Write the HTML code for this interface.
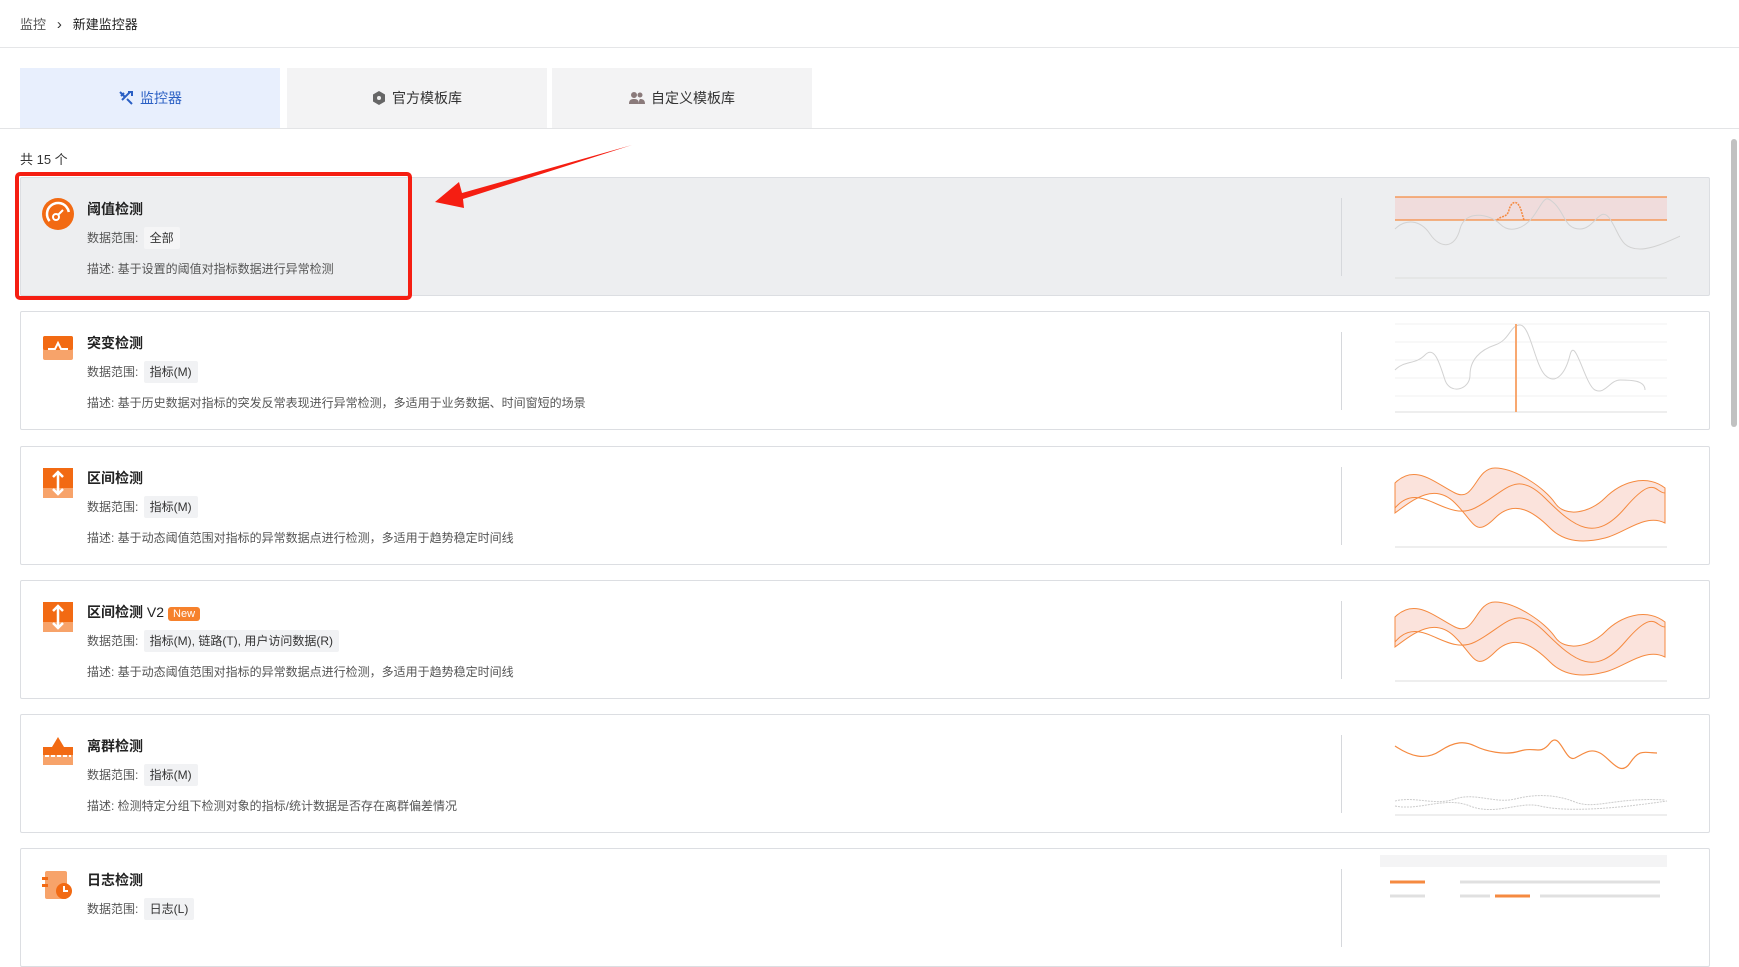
<!DOCTYPE html>
<html><head><meta charset="utf-8"><style>
*{box-sizing:border-box;margin:0;padding:0}
body{width:1739px;height:907px;overflow:hidden;background:#fff;font-family:"Liberation Sans","Noto Sans CJK SC",sans-serif;color:#333;font-size:13px;position:relative}
.bc{position:absolute;left:20px;top:14px;font-size:13px;color:#555}
.bc b{font-weight:normal;color:#222}
.hl{position:absolute;left:0;right:0;top:47px;border-top:1px solid #e5e6e8}
.tab{position:absolute;top:68px;width:260px;height:60px;background:#f3f3f4;display:flex;align-items:center;justify-content:center;font-size:14px;color:#333;gap:6px}
.tab.a{background:#e8effd;color:#2a5fc4}
.tl{position:absolute;left:0;right:0;top:128px;border-top:1px solid #e3e4e6}
.cnt{position:absolute;left:20px;top:149px;font-size:13px;color:#333}
.card{position:absolute;left:20px;width:1690px;height:119px;border:1px solid #dcdee2;border-radius:2px;background:#fff}
.card.g{background:#edeef0}
.ic{position:absolute;left:21px;top:20px;width:32px;height:32px}
.t{position:absolute;left:66px;top:21px;font-size:14px;font-weight:bold;color:#222}
.t span{font-weight:normal}
.new{display:inline-block;background:#f6812c;color:#fff;font-size:11px;font-weight:bold;padding:1px 5px;border-radius:3px;margin-left:4px}
.dr{position:absolute;left:66px;top:51px;font-size:12px;color:#555}
.dr i{font-style:normal;background:#f1f2f4;padding:4px 6px;border-radius:2px;color:#333;margin-left:2px}
.card.g .dr i{background:#f5f5f6}
.ds{position:absolute;left:66px;top:82px;font-size:12px;color:#555}
.dv{position:absolute;left:1320px;top:20px;height:78px;border-left:1px solid #d6d8dc}
.ch{position:absolute;left:1339px;top:6px}
.red{position:absolute;left:15px;top:172px;width:397px;height:128px;border:4px solid #f51e12;border-radius:5px}
.sb{position:absolute;left:1731px;top:139px;width:6px;height:288px;background:#c1c1c1;border-radius:3px}
</style></head><body>
<div class="bc">监控 &nbsp;&nbsp;<span style="color:#333;font-size:15px">›</span>&nbsp;&nbsp; <b>新建监控器</b></div>
<div class="hl"></div>
<div class="tab a" style="left:20px"><svg width="16" height="16" viewBox="0 0 16 16"><path d="M2 2l5 5M3 6l3-3M9 9l5 5M12 2l-8 8M10 2h4v4" stroke="#2a5fc4" stroke-width="2" fill="none"/></svg>监控器</div>
<div class="tab" style="left:287px"><svg width="14" height="16" viewBox="0 0 14 16"><path d="M7 1l6 3.5v7L7 15 1 11.5v-7z" fill="#666"/><circle cx="7" cy="8" r="2" fill="#eee"/></svg>官方模板库</div>
<div class="tab" style="left:552px"><svg width="16" height="14" viewBox="0 0 16 14"><circle cx="5" cy="4" r="3" fill="#8a7a7a"/><circle cx="11" cy="4" r="2.5" fill="#8a7a7a"/><path d="M0 13c0-4 2-5 5-5s5 1 5 5zM10 13c0-3 0-4 1-5 3 0 5 1 5 5z" fill="#8a7a7a"/></svg>自定义模板库</div>
<div class="tl"></div>
<div class="cnt">共 15 个</div>

<div class="card g" style="top:177px">
<svg class="ic" viewBox="0 0 32 32"><circle cx="16" cy="16" r="16" fill="#f26a13"/><circle cx="16" cy="16" r="11" fill="none" stroke="#fff" stroke-width="2.5" stroke-dasharray="40 30" transform="rotate(140 16 16)"/><circle cx="14" cy="19" r="3" fill="none" stroke="#fff" stroke-width="2"/><path d="M16 17l5-5" stroke="#fff" stroke-width="2"/></svg>
<div class="t">阈值检测</div>
<div class="dr">数据范围: <i>全部</i></div>
<div class="ds">描述: 基于设置的阈值对指标数据进行异常检测</div>
<div class="dv"></div>
<svg class="ch" width="320" height="104" viewBox="0 0 320 104"><rect x="35" y="13" width="272" height="23" fill="#f0dcdc"/><path d="M35 13h272M35 36h272" stroke="#f58a40" stroke-width="1.2"/><path d="M35 94h272" stroke="#ddd"/><path d="M35 45c10-10 25-10 35 5s25 15 30-5 30-15 40-5 25 5 35-10 10-20 20-10 10 25 25 25 20-25 30-10 10 30 30 30 50-20 60-20 15 5 20 15" stroke="#d2d2d2" fill="none"/><path d="M137 36c5-5 10-2 12-10s8-12 12 0l3 10" stroke="#f58a40" fill="none" stroke-dasharray="2 1" stroke-width="1.5"/></svg>
</div>

<div class="card" style="top:311px">
<svg class="ic" viewBox="0 0 32 32"><rect x="1" y="4" width="30" height="24" rx="2" fill="#f7a36a"/><rect x="1" y="4" width="30" height="14" rx="2" fill="#f26a13"/><path d="M6 17h7l3-6 3 6h7" stroke="#fff" stroke-width="2" fill="none"/></svg>
<div class="t">突变检测</div>
<div class="dr">数据范围: <i>指标(M)</i></div>
<div class="ds">描述: 基于历史数据对指标的突发反常表现进行异常检测，多适用于业务数据、时间窗短的场景</div>
<div class="dv"></div>
<svg class="ch" width="320" height="104" viewBox="0 0 320 104"><path d="M35 6h272M35 24h272M35 42h272M35 60h272M35 78h272" stroke="#f2f2f2"/><path d="M35 94h272" stroke="#ddd"/><path d="M35 52c10-10 20-5 30-15s15 10 20 25 25 10 25-5 10-25 25-30 15-20 25-20 15 40 25 50 20 0 25-20 15 30 25 35 15-10 25-10 25 0 25 10" stroke="#d2d2d2" fill="none"/><path d="M156 6v88" stroke="#f8a870" stroke-width="2"/></svg>
</div>

<div class="card" style="top:446px">
<svg class="ic" viewBox="0 0 32 32"><rect x="1" y="1" width="30" height="30" fill="#f7a36a"/><rect x="1" y="1" width="30" height="20" fill="#f26a13"/><path d="M16 5v22M11 10l5-5 5 5M11 22l5 5 5-5" stroke="#fff" stroke-width="2.5" fill="none"/></svg>
<div class="t">区间检测</div>
<div class="dr">数据范围: <i>指标(M)</i></div>
<div class="ds">描述: 基于动态阈值范围对指标的异常数据点进行检测，多适用于趋势稳定时间线</div>
<div class="dv"></div>
<svg class="ch" width="320" height="104" viewBox="0 0 320 104"><path d="M35 30c20-20 40 0 60 10s20-25 40-25 50 20 60 35 35 10 50-5 40-25 60-10v35c-20-10-40 10-60 15s-40 5-55-10-35-30-55-10-20 5-40-15-40-5-60 10z" fill="#fbe3dc" stroke="#f58a40"/><path d="M35 55c25-30 50 15 80 0s40-40 70-10 50 45 80 10 30-15 40-15" stroke="#f58a40" fill="none" stroke-width="1"/><path d="M35 94h272" stroke="#ddd"/></svg>
</div>

<div class="card" style="top:580px">
<svg class="ic" viewBox="0 0 32 32"><rect x="1" y="1" width="30" height="30" fill="#f7a36a"/><rect x="1" y="1" width="30" height="20" fill="#f26a13"/><path d="M16 5v22M11 10l5-5 5 5M11 22l5 5 5-5" stroke="#fff" stroke-width="2.5" fill="none"/></svg>
<div class="t">区间检测 <span>V2</span><span class="new">New</span></div>
<div class="dr">数据范围: <i>指标(M), 链路(T), 用户访问数据(R)</i></div>
<div class="ds">描述: 基于动态阈值范围对指标的异常数据点进行检测，多适用于趋势稳定时间线</div>
<div class="dv"></div>
<svg class="ch" width="320" height="104" viewBox="0 0 320 104"><path d="M35 30c20-20 40 0 60 10s20-25 40-25 50 20 60 35 35 10 50-5 40-25 60-10v35c-20-10-40 10-60 15s-40 5-55-10-35-30-55-10-20 5-40-15-40-5-60 10z" fill="#fbe3dc" stroke="#f58a40"/><path d="M35 55c25-30 50 15 80 0s40-40 70-10 50 45 80 10 30-15 40-15" stroke="#f58a40" fill="none"/><path d="M35 94h272" stroke="#ddd"/></svg>
</div>

<div class="card" style="top:714px">
<svg class="ic" viewBox="0 0 32 32"><path d="M10 12l6-10 6 10z" fill="#f26a13"/><rect x="1" y="12" width="30" height="18" fill="#f7a36a"/><rect x="1" y="12" width="30" height="8" fill="#f26a13"/><path d="M3 21h26" stroke="#fff" stroke-width="2" stroke-dasharray="4 2"/></svg>
<div class="t">离群检测</div>
<div class="dr">数据范围: <i>指标(M)</i></div>
<div class="ds">描述: 检测特定分组下检测对象的指标/统计数据是否存在离群偏差情况</div>
<div class="dv"></div>
<svg class="ch" width="320" height="104" viewBox="0 0 320 104"><path d="M35 25c15 10 30 15 45 5s25-10 35-5 30 10 45 5 20 5 30-8 15 20 25 15 15-10 25-5 20 25 30 10 15-10 27-10" stroke="#f58a40" fill="none" stroke-width="1.2"/><path d="M35 80c20-5 40 5 60-2s40 5 60 0 40-5 60 3 40-5 90-2M35 85c25 5 50-10 75 0s50-5 70 0 60 5 127-5" stroke="#ccc" fill="none" stroke-dasharray="2 1"/><path d="M35 94h272" stroke="#ddd"/></svg>
</div>

<div class="card" style="top:848px">
<svg class="ic" viewBox="0 0 32 32"><rect x="3" y="2" width="22" height="28" rx="2" fill="#f7a36a"/><rect x="0" y="8" width="6" height="3" fill="#f26a13"/><rect x="0" y="15" width="6" height="3" fill="#f26a13"/><circle cx="22" cy="22" r="8" fill="#f26a13"/><path d="M22 17v5h4" stroke="#fff" stroke-width="2" fill="none"/></svg>
<div class="t">日志检测</div>
<div class="dr">数据范围: <i>日志(L)</i></div>
<div class="dv"></div>
<svg class="ch" width="320" height="104" viewBox="0 0 320 104"><rect x="20" y="0" width="287" height="12" fill="#f4f4f5"/><path d="M30 27h35" stroke="#f58a40" stroke-width="3"/><path d="M100 27h200M30 41h35M100 41h30M180 41h120" stroke="#e0e0e0" stroke-width="3"/><path d="M135 41h35" stroke="#f58a40" stroke-width="3"/></svg>
</div>

<div class="red"></div>
<svg style="position:absolute;left:0;top:0" width="700" height="260"><polygon points="632,145 462,193 459,182 435,202 464,208 463,199" fill="#f51e12"/></svg>
<div class="sb"></div>
</body></html>
